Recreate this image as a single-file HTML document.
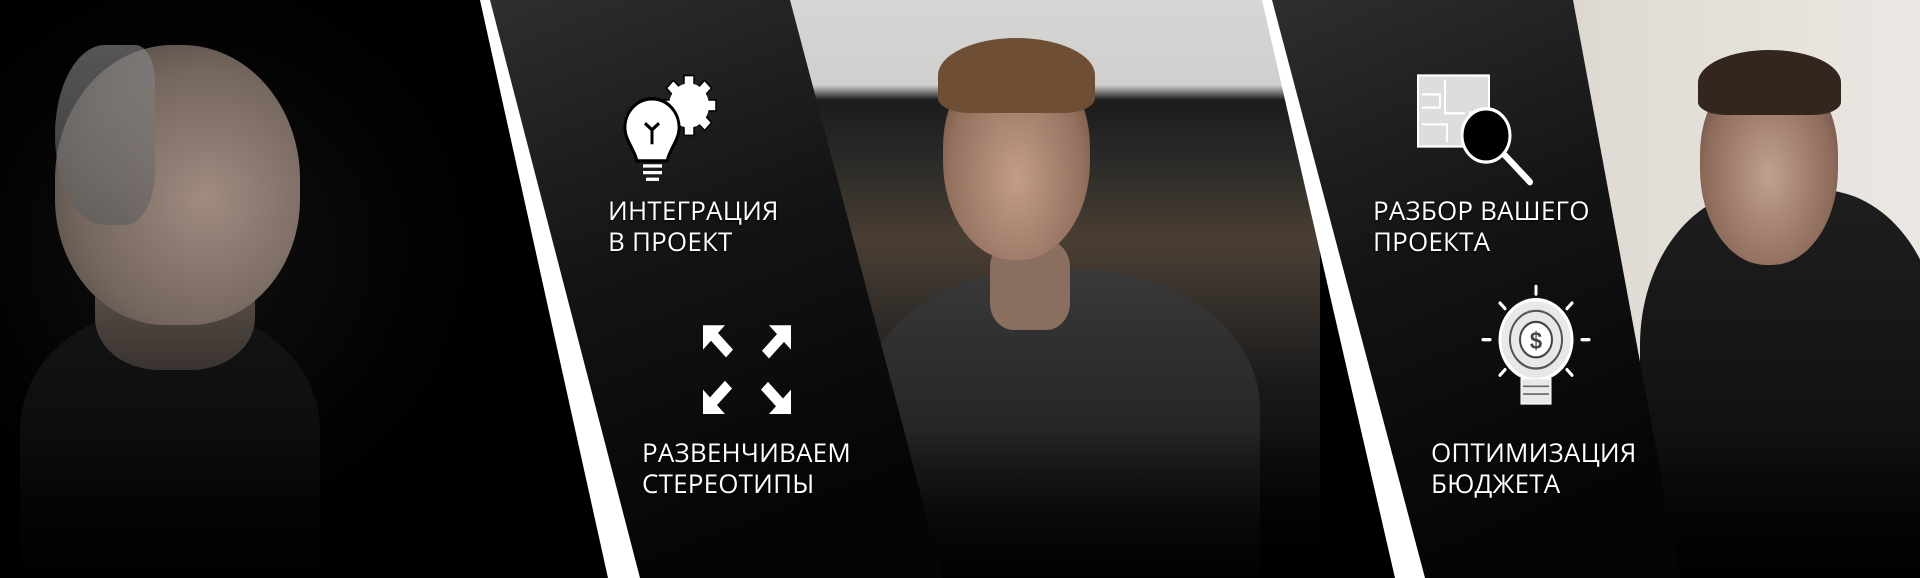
<!DOCTYPE html>
<html><head><meta charset="utf-8"><style>
html,body{margin:0;padding:0;background:#000;overflow:hidden;}
#w{position:relative;width:1920px;height:578px;overflow:hidden;background:#000;font-family:"Open Sans","Liberation Sans","DejaVu Sans",sans-serif;}
.a{position:absolute;}
.t{position:absolute;color:#fff;font-size:26px;line-height:31px;letter-spacing:0.2px;text-shadow:0 1px 2px #000;white-space:nowrap;}
</style></head><body><div id="w">
<!-- photo 1 person -->
<div class="a" style="left:0;top:0;width:620px;height:578px;background:radial-gradient(ellipse 300px 300px at 200px 250px,#101010,#030303 70%,#000);"></div>
<div class="a" style="left:20px;top:310px;width:300px;height:268px;border-radius:45% 45% 0 0;background:linear-gradient(#141414,#050505);"></div>
<div class="a" style="left:95px;top:240px;width:160px;height:130px;border-radius:40%;background:linear-gradient(#6a5e58,#3a332f);"></div>
<div class="a" style="left:55px;top:45px;width:245px;height:280px;border-radius:48% 48% 45% 45%;background:radial-gradient(ellipse at 62% 55%,#a08b80,#74665e 60%,#3d3633);"></div>
<div class="a" style="left:55px;top:45px;width:100px;height:180px;border-radius:50% 20% 30% 50%;background:linear-gradient(#8d8d8d,#5a5a5a);opacity:.6"></div>
<!-- middle photo -->
<div class="a" style="left:760px;top:0;width:560px;height:578px;background:linear-gradient(#d6d6d4 0,#cfcfcd 85px,#1c1c1c 100px,#2a2a28 160px,#4a3e33 240px,#3a332d 290px,#1a1a1a 380px,#060606 520px,#000);"></div>
<div class="a" style="left:860px;top:270px;width:400px;height:308px;border-radius:45% 45% 0 0;background:linear-gradient(#393939,#262626 50%,#080808);"></div>
<div class="a" style="left:990px;top:240px;width:80px;height:90px;background:#8a6e60;border-radius:30%;"></div>
<div class="a" style="left:943px;top:55px;width:147px;height:205px;border-radius:45% 45% 48% 48%;background:radial-gradient(ellipse at 50% 60%,#c39d8a,#94705e 65%,#5e4030);"></div>
<div class="a" style="left:938px;top:38px;width:157px;height:75px;border-radius:50% 50% 20% 20%;background:#6e4e34;"></div>
<!-- right photo -->
<div class="a" style="left:1400px;top:0;width:520px;height:578px;background:linear-gradient(90deg,#c4c0ba,#e0dbd4 40%,#ebe7e2);"></div>
<div class="a" style="left:1640px;top:190px;width:300px;height:388px;border-radius:40% 40% 0 0;background:linear-gradient(#1e1e1e,#121212 60%,#050505);"></div>
<div class="a" style="left:1700px;top:65px;width:138px;height:200px;border-radius:45% 45% 48% 48%;background:radial-gradient(ellipse at 50% 55%,#c0a090,#8e6c5c 65%,#4e3a30);"></div>
<div class="a" style="left:1698px;top:50px;width:143px;height:65px;border-radius:50% 50% 20% 20%;background:#33261e;"></div>
<div class="a" style="left:0;top:430px;width:1920px;height:148px;background:linear-gradient(rgba(0,0,0,0),rgba(0,0,0,.85));"></div>
<!-- bands -->
<svg class="a" style="left:0;top:0" width="1920" height="578">
<defs>
<linearGradient id="g1" x1="0" y1="0" x2="0.3" y2="1"><stop offset="0" stop-color="#2e2e2e"/><stop offset="0.5" stop-color="#141414"/><stop offset="1" stop-color="#050505"/></linearGradient>
</defs>
<polygon points="486,0 790,0 943,578 637,578" fill="url(#g1)"/>
<polygon points="480,0 490,0 640,578 608,578" fill="#fff"/>
<polygon points="1268,0 1573,0 1680,578 1423,578" fill="url(#g1)"/>
<polygon points="1262,0 1272,0 1425,578 1395,578" fill="#fff"/>
<g transform="matrix(1,0,0,1.11,0,0)">
<!-- gear -->
<g transform="translate(689,95)" fill="#fff" stroke="#000" stroke-width="1.5">
<g><rect x="-5" y="-27" width="10" height="10"/><rect x="-5" y="-27" width="10" height="10" transform="rotate(45)"/><rect x="-5" y="-27" width="10" height="10" transform="rotate(90)"/><rect x="-5" y="-27" width="10" height="10" transform="rotate(135)"/><rect x="-5" y="-27" width="10" height="10" transform="rotate(180)"/><rect x="-5" y="-27" width="10" height="10" transform="rotate(225)"/><rect x="-5" y="-27" width="10" height="10" transform="rotate(270)"/><rect x="-5" y="-27" width="10" height="10" transform="rotate(315)"/></g>
<circle r="20" stroke="none"/>
</g>
<!-- bulb -->
<path d="M652,89 a27,26 0 0 1 27,28 c-1,10 -9,17 -12,28 h-30 c-3,-11 -11,-18 -12,-28 a27,26 0 0 1 27,-28z" fill="#fff" stroke="#000" stroke-width="3"/>
<path d="M652,117 l-7,-6 M652,117 l7,-6 M652,117 v13" stroke="#000" stroke-width="3" fill="none"/>
<g fill="#fff"><rect x="643" y="148" width="19" height="3"/><rect x="643" y="154" width="19" height="3"/><rect x="646" y="160" width="13" height="3"/></g>
<!-- arrows -->
<g fill="#fff">
<path d="M703,293 h22 l-7,7 15,15 -7,7 -15,-15 -8,8z"/>
<path d="M791,293 v22 l-7,-7 -15,15 -7,-7 15,-15 -8,-8z"/>
<path d="M703,373 v-22 l7,7 15,-15 7,7 -15,15 8,8z"/>
<path d="M791,373 h-22 l7,-7 -15,-15 7,-7 15,15 8,-8z"/>
</g>
<!-- map + magnifier -->
<rect x="1418" y="68" width="71" height="64" fill="#ddd" stroke="#fff" stroke-width="2"/>
<g stroke="#fff" stroke-width="2" fill="none"><path d="M1422,85 h18 v12 h-18 M1445,72 v30 h20 M1470,100 v28 M1422,112 h25 v16"/></g>
<line x1="1505" y1="140" x2="1530" y2="164" stroke="#fff" stroke-width="6" stroke-linecap="round"/>
<circle cx="1486" cy="122" r="24" fill="#000" stroke="#fff" stroke-width="3"/>
<!-- dollar bulb -->
<g stroke="#fff" stroke-width="3" fill="none" stroke-linecap="round">
<path d="M1536,258 v7 M1500,273 l5,5 M1572,273 l-5,5 M1483,306 h7 M1582,306 h7 M1500,338 l5,-5 M1572,338 l-5,-5"/>
</g>
<circle cx="1536" cy="306" r="36" fill="#e8e8e8" stroke="#fff" stroke-width="3"/>
<circle cx="1536" cy="306" r="26" fill="none" stroke="#555" stroke-width="2"/>
<circle cx="1536" cy="306" r="16" fill="#fff" stroke="#444" stroke-width="2"/>
<text x="1536" y="314" font-size="22" font-family="Liberation Sans" font-weight="bold" text-anchor="middle" fill="#444">$</text>
<rect x="1521" y="341" width="30" height="23" fill="#e8e8e8" stroke="#fff"/>
<g stroke="#666" stroke-width="1.5"><line x1="1523" y1="348" x2="1549" y2="348"/><line x1="1523" y1="355" x2="1549" y2="355"/></g>
</g>
</svg>
<div class="t" style="left:608px;top:195px;">ИНТЕГРАЦИЯ<br>В ПРОЕКТ</div>
<div class="t" style="left:642px;top:437px;">РАЗВЕНЧИВАЕМ<br>СТЕРЕОТИПЫ</div>
<div class="t" style="left:1373px;top:195px;">РАЗБОР ВАШЕГО<br>ПРОЕКТА</div>
<div class="t" style="left:1431px;top:437px;">ОПТИМИЗАЦИЯ<br>БЮДЖЕТА</div>
</div></body></html>
